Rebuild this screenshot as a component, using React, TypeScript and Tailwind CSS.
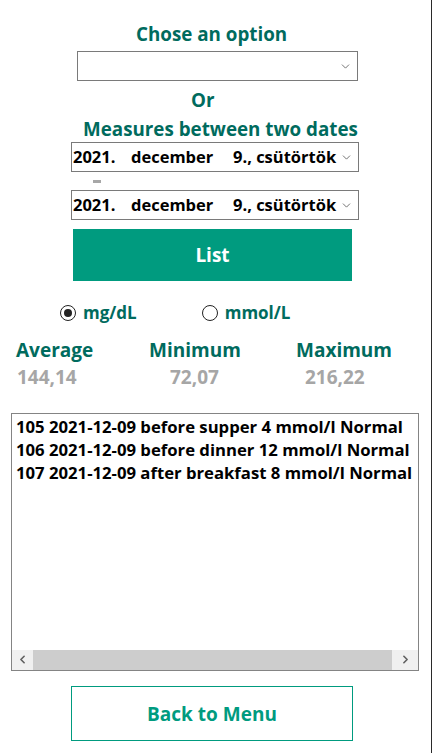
import { ChevronDown, ChevronLeft, ChevronRight } from "lucide-react";

const rows = [
  "105 2021-12-09 before supper 4 mmol/l Normal",
  "106 2021-12-09 before dinner 12 mmol/l Normal",
  "107 2021-12-09 after breakfast 8 mmol/l Normal",
];

function DateBox() {
  return (
    <div className="flex h-[30px] w-[288px] items-center whitespace-nowrap border border-[#7a7a7a] pl-[1px] pr-[5px] text-[16.5px] font-bold text-black">
      <span className="w-[58px]">2021.</span>
      <span className="w-[102px]">december</span>
      <span>9., csütörtök</span>
      <ChevronDown className="ml-auto h-[13px] w-[13px] shrink-0 text-[#555]" strokeWidth={1.5} />
    </div>
  );
}

export default function App() {
  return (
    <div
      className="flex min-h-[753px] w-[432px] flex-col border-r border-[#2a2a2a] bg-white"
      style={{ fontFamily: '"Open Sans", "Noto Sans", sans-serif' }}
    >
      <h2 className="mt-[22px] ml-[136px] text-[18.8px] font-bold leading-[24px] text-[#006b5e]">Chose an option</h2>
      <div className="ml-[77px] mt-[5px] flex h-[30px] w-[281px] items-center justify-end border border-[#7a7a7a] pr-[5px]">
        <ChevronDown className="h-[13px] w-[13px] text-[#555]" strokeWidth={1.5} />
      </div>
      <p className="ml-[191px] mt-[7px] text-[18.8px] font-bold leading-[24px] text-[#006b5e]">Or</p>
      <p className="ml-[83px] mt-[5px] whitespace-nowrap text-[18.8px] font-bold leading-[24px] text-[#006b5e]">Measures between two dates</p>
      <div className="ml-[71px] mt-[1px] flex w-[288px] flex-col">
        <DateBox />
        <div className="ml-[22px] mt-[8px] h-[3px] w-[8px] bg-[#a7a7a7]" />
        <div className="mt-[7px]">
          <DateBox />
        </div>
      </div>
      <button className="ml-[73px] mt-[9px] h-[52px] w-[279px] bg-[#009b7f] text-[19px] font-bold text-white">List</button>

      <div className="mt-[19px] flex w-full items-center pl-[60px] text-[17px] font-bold text-[#006b5e]">
        <span className="flex h-[16px] w-[16px] items-center justify-center rounded-full border-[1.5px] border-[#222]">
          <span className="h-[8px] w-[8px] rounded-full bg-[#222]" />
        </span>
        <span className="ml-[7px]">mg/dL</span>
        <span className="ml-[65px] h-[16px] w-[16px] rounded-full border-[1.5px] border-[#222]" />
        <span className="ml-[7px]">mmol/L</span>
      </div>

      <div className="mt-[11px] grid w-full grid-cols-[133px_147px_1fr] pl-[16px] text-[19px] font-bold leading-[27px]">
        <span className="text-[#006b5e]">Average</span>
        <span className="text-[#006b5e]">Minimum</span>
        <span className="text-[#006b5e]">Maximum</span>
        <span className="pl-[1px] text-[#a6a6a6]">144,14</span>
        <span className="pl-[21px] text-[#a6a6a6]">72,07</span>
        <span className="pl-[9px] text-[#a6a6a6]">216,22</span>
      </div>

      <div className="ml-[11px] mt-[22px] flex h-[258px] w-[408px] flex-col border border-[#848484]">
        <div className="flex-1 overflow-hidden whitespace-nowrap pl-[4px] pt-[1px] text-[16.7px] font-bold leading-[23px] text-black">
          {rows.map((r) => (
            <div key={r}>{r}</div>
          ))}
        </div>
        <div className="flex h-[20px] items-stretch bg-[#f0f0f0]">
          <div className="flex w-[21px] items-center justify-center">
            <ChevronLeft className="h-[13px] w-[13px] text-[#606060]" strokeWidth={3} />
          </div>
          <div className="flex-1 bg-[#cdcdcd]" />
          <div className="flex w-[26px] items-center justify-center">
            <ChevronRight className="h-[13px] w-[13px] text-[#606060]" strokeWidth={3} />
          </div>
        </div>
      </div>

      <button className="ml-[71px] mt-[15px] h-[55px] w-[282px] border border-[#009b7f] pt-[2px] text-[19px] font-bold text-[#009b7f]">
        Back to Menu
      </button>
    </div>
  );
}
